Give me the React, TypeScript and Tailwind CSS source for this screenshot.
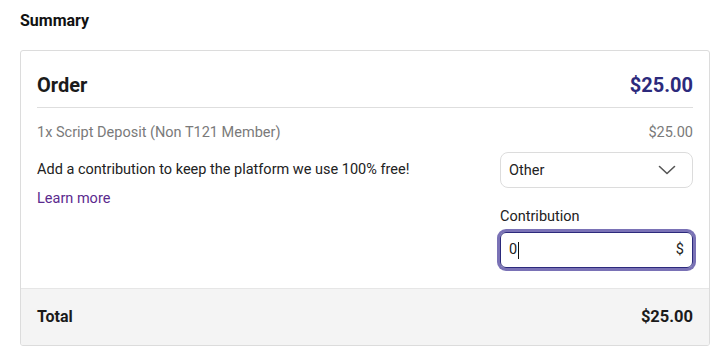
import React from "react";

export default function App() {
  return (
    <div className="px-[20px] pt-[11px] bg-white min-h-[361px]" style={{ fontFamily: "Roboto, 'Noto Sans', sans-serif" }}>
      <div className="text-[16px] leading-[19px] font-bold text-[#111]">Summary</div>
      <div className="mt-[20px] w-[690px] border border-[#dcdcdc] rounded-[3px] overflow-hidden">
        <div className="px-[16px]">
          <div className="flex items-center justify-between pt-[20px] pb-[8px] border-b border-[#dedede]">
            <span className="text-[20px] leading-[28px] font-bold text-[#1b1b1b]">Order</span>
            <span className="text-[20px] leading-[28px] font-bold text-[#2c2a7c]">$25.00</span>
          </div>
          <div className="flex items-center justify-between mt-[15px] text-[14.5px] leading-[20px] text-[#7a7a7a]">
            <span>1x Script Deposit (Non T121 Member)</span>
            <span>$25.00</span>
          </div>
          <div className="flex justify-between mt-[9px] pb-[20px]">
            <div className="flex flex-col pt-[8px]">
              <span className="text-[14.5px] leading-[20px] text-[#222]">Add a contribution to keep the platform we use 100% free!</span>
              <span className="mt-[9px] text-[14.5px] leading-[20px] text-[#5b2a8e]">Learn more</span>
            </div>
            <div className="w-[193px] flex flex-col">
              <div className="h-[36px] border border-[#dcdcdc] rounded-[8px] flex items-center justify-between pl-[8px] pr-[16px]">
                <span className="text-[14.5px] text-[#222] pt-[1px]">Other</span>
                <svg width="18" height="10" viewBox="0 0 18 10" fill="none">
                  <path d="M1.5 1.5 L9 8.5 L16.5 1.5" stroke="#555" strokeWidth="1.6" strokeLinecap="round" strokeLinejoin="round" />
                </svg>
              </div>
              <span className="mt-[19px] text-[14.5px] leading-[20px] text-[#222]">Contribution</span>
              <div className="mt-[5px] h-[36px] border border-[#2c2a7c] rounded-[6px] ring-[3px] ring-[#7a72b6] flex items-center justify-between pl-[8px] pr-[8px]">
                <span className="text-[14.5px] text-[#222] flex items-center">
                  0<span className="inline-block w-[1px] h-[17px] bg-[#111] ml-[1px]" />
                </span>
                <span className="text-[14.5px] text-[#222]">$</span>
              </div>
            </div>
          </div>
        </div>
        <div className="h-[57px] bg-[#f4f4f4] border-t border-[#e6e6e6] flex items-center justify-between px-[16px]">
          <span className="text-[16px] font-bold text-[#1b1b1b]">Total</span>
          <span className="text-[16.5px] font-bold text-[#1b1b1b]">$25.00</span>
        </div>
      </div>
    </div>
  );
}
